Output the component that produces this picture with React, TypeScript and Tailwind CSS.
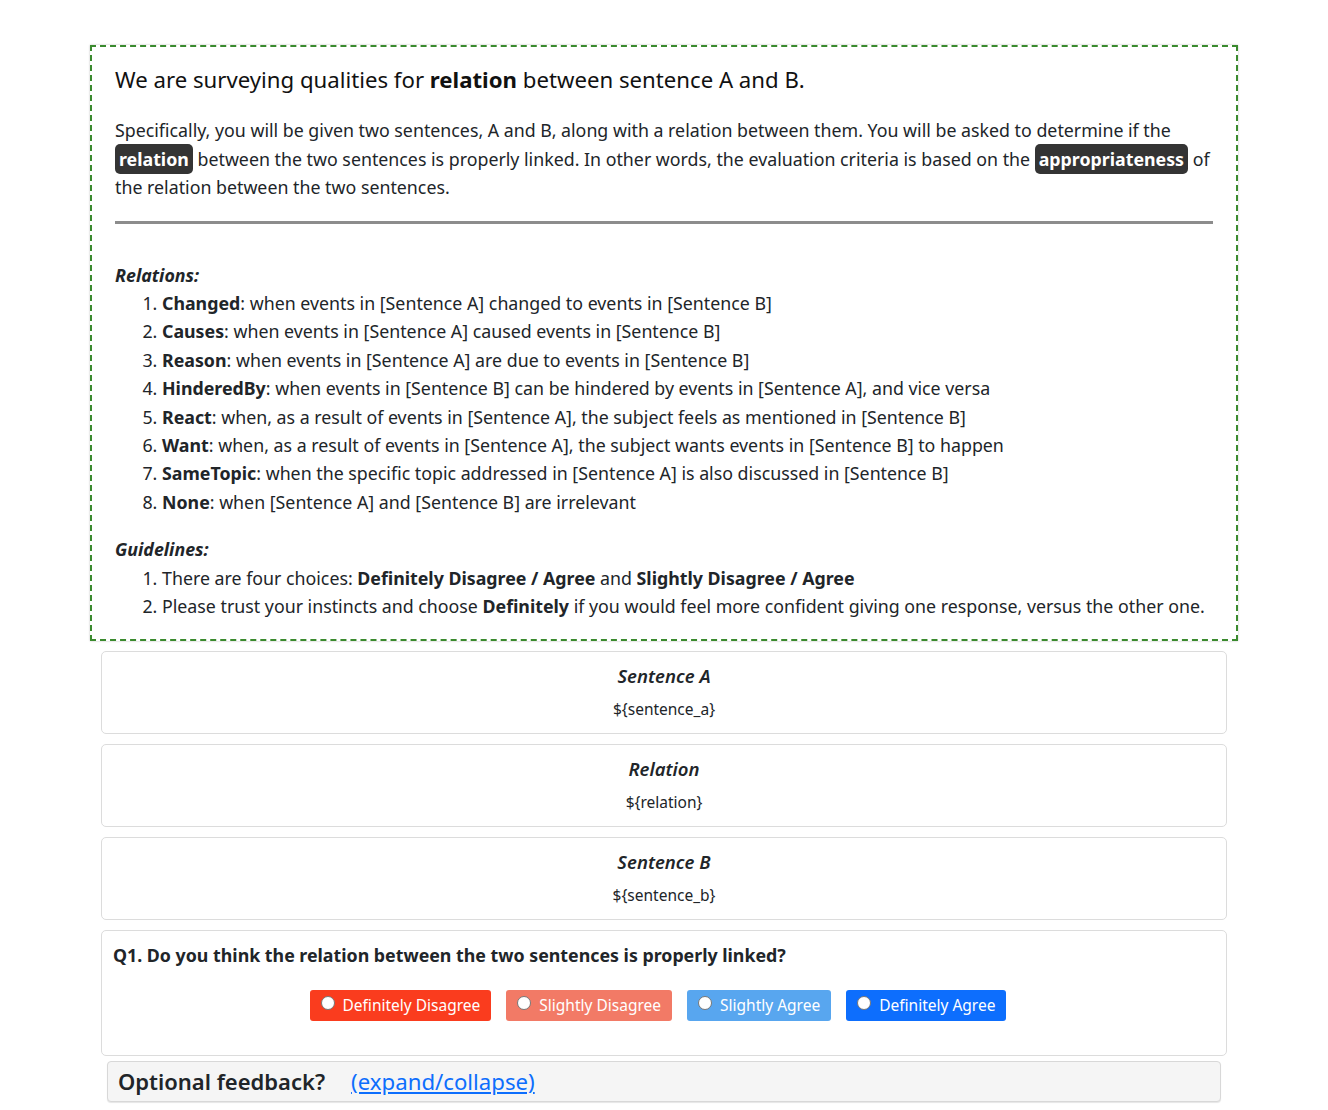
import React from "react";

const font = { fontFamily: '"Noto Sans", "Open Sans", "Liberation Sans", sans-serif' };

function Badge({ children }: { children: React.ReactNode }) {
  return (
    <span className="rounded-[5px] bg-[#343434] px-[4px] py-[3px] text-white font-bold">
      {children}
    </span>
  );
}

function InfoCard({ title, value }: { title: string; value: string }) {
  return (
    <div className="mx-[11px] mt-[10px] rounded-[5px] border border-[#dcdcdc] bg-white pt-[10px] pb-[13px] text-center">
      <div className="text-[18.5px] font-semibold italic leading-[28px] text-[#212529]">{title}</div>
      <div className="mt-[8px] text-[15.5px] leading-[22px] text-[#212529]">{value}</div>
    </div>
  );
}

function ChoiceButton({ label, bg }: { label: string; bg: string }) {
  return (
    <label className={`flex h-[31px] items-center rounded-[3px] px-[11px] text-[15.5px] text-white ${bg}`}>
      <span className="mr-[8px] -mt-[5px] inline-block h-[14px] w-[14px] rounded-full border border-[#777] bg-white" />
      {label}
    </label>
  );
}

export default function App() {
  return (
    <div className="min-h-[1110px] bg-white pt-[45px] text-[#212529]" style={font}>
      <div className="mx-auto w-[1148px]">
        <div className="border-2 border-dashed border-[#3a8a2e] px-[23px] pt-[15px] pb-[19px] shadow-[0_0_2px_rgba(0,0,0,0.25)]">
          <h1 className="text-[22.2px] leading-[36px] text-[#111]">
            We are surveying qualities for <b>relation</b> between sentence A and B.
          </h1>
          <p className="mt-[18px] text-[17.8px] leading-[28.5px]">
            Specifically, you will be given two sentences, A and B, along with a relation between them. You will be asked to determine if the{" "}
            <Badge>relation</Badge> between the two sentences is properly linked. In other words, the evaluation criteria is based on the{" "}
            <Badge>appropriateness</Badge> of the relation between the two sentences.
          </p>
          <hr className="mt-[19px] border-t-[3px] border-[#8c8c8c]" />
          <div className="mt-[37px] text-[17.8px] leading-[28.4px]">
            <div className="font-bold italic">Relations:</div>
            <ol className="list-decimal pl-[47px]">
              <li><b>Changed</b>: when events in [Sentence A] changed to events in [Sentence B]</li>
              <li><b>Causes</b>: when events in [Sentence A] caused events in [Sentence B]</li>
              <li><b>Reason</b>: when events in [Sentence A] are due to events in [Sentence B]</li>
              <li><b>HinderedBy</b>: when events in [Sentence B] can be hindered by events in [Sentence A], and vice versa</li>
              <li><b>React</b>: when, as a result of events in [Sentence A], the subject feels as mentioned in [Sentence B]</li>
              <li><b>Want</b>: when, as a result of events in [Sentence A], the subject wants events in [Sentence B] to happen</li>
              <li><b>SameTopic</b>: when the specific topic addressed in [Sentence A] is also discussed in [Sentence B]</li>
              <li><b>None</b>: when [Sentence A] and [Sentence B] are irrelevant</li>
            </ol>
            <div className="mt-[19px] font-bold italic">Guidelines:</div>
            <ol className="list-decimal pl-[47px]">
              <li>There are four choices: <b>Definitely Disagree / Agree</b> and <b>Slightly Disagree / Agree</b></li>
              <li>Please trust your instincts and choose <b>Definitely</b> if you would feel more confident giving one response, versus the other one.</li>
            </ol>
          </div>
        </div>

        <InfoCard title="Sentence A" value="${sentence_a}" />
        <InfoCard title="Relation" value="${relation}" />
        <InfoCard title="Sentence B" value="${sentence_b}" />

        <div className="mx-[11px] mt-[10px] h-[126px] rounded-[5px] border border-[#dcdcdc] bg-white px-[11px] pt-[11px]">
          <div className="text-[17.8px] font-bold leading-[26px]">
            Q1. Do you think the relation between the two sentences is properly linked?
          </div>
          <div className="mt-[22px] flex justify-center gap-[15px] pr-[12px]">
            <ChoiceButton label="Definitely Disagree" bg="bg-[#fa3c1e]" />
            <ChoiceButton label="Slightly Disagree" bg="bg-[#f27a66]" />
            <ChoiceButton label="Slightly Agree" bg="bg-[#58a6ef]" />
            <ChoiceButton label="Definitely Agree" bg="bg-[#0d6efd]" />
          </div>
        </div>

        <div className="mx-[17px] mt-[5px] flex h-[41px] items-center rounded-[4px] border border-[#d8d8d8] bg-[#f5f5f5] px-[10px] shadow-[0_1px_1px_rgba(0,0,0,0.1)]">
          <span className="text-[22px] font-semibold text-[#212529]">Optional feedback?</span>
          <a href="#" className="ml-[26px] text-[22.2px] text-[#0d6efd] underline">(expand/collapse)</a>
        </div>
      </div>
    </div>
  );
}
